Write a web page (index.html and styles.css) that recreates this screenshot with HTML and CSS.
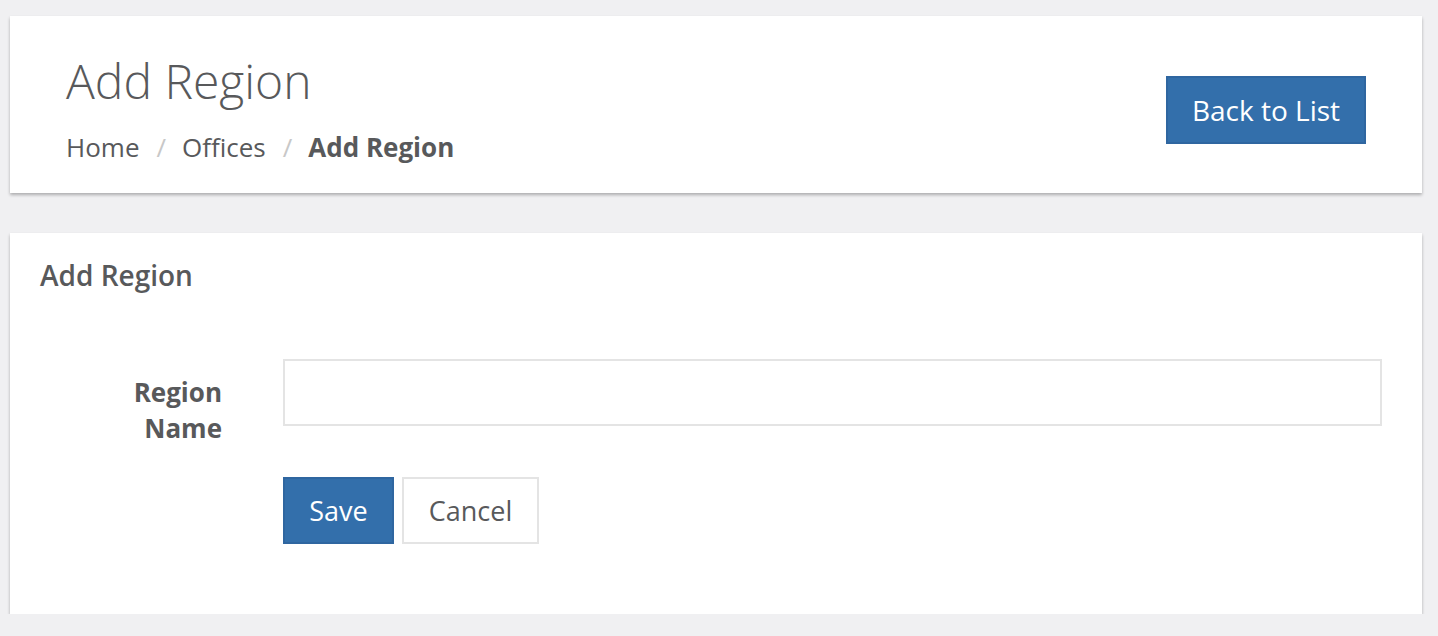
FILE: index.html
```html
<!DOCTYPE html>
<html>
<head>
<meta charset="utf-8">
<link rel="stylesheet" href="styles.css">
</head>
<body>
<div class="page">
  <header class="card head-card">
    <div class="head-text">
      <h1 class="title">Add Region</h1>
      <nav class="crumbs">
        <span class="crumb">Home</span><span class="sep">/</span><span class="crumb">Offices</span><span class="sep">/</span><span class="crumb current">Add Region</span>
      </nav>
    </div>
    <button class="btn btn-primary back-btn">Back to List</button>
  </header>

  <section class="card form-card">
    <h2 class="form-title">Add Region</h2>
    <div class="form-row">
      <label class="field-label">Region<br>Name</label>
      <div class="field">
        <input class="text-input" type="text">
      </div>
    </div>
    <div class="actions">
      <button class="btn btn-primary">Save</button>
      <button class="btn btn-default">Cancel</button>
    </div>
  </section>
</div>
</body>
</html>
```

FILE: styles.css
```css
html, body {
  margin: 0;
  padding: 0;
  background: #f0f0f2;
}
body {
  font-family: "Open Sans", "Liberation Sans", sans-serif;
  color: #58595b;
}
.page {
  padding: 16px 16px 0 10px;
  display: flex;
  flex-direction: column;
  gap: 40px;
}
.card {
  background: #fff;
  box-shadow: 0 2px 3px rgba(0, 0, 0, 0.28);
}
.head-card {
  display: flex;
  justify-content: space-between;
  align-items: flex-start;
  padding: 37px 56px 28px 56px;
}
.title {
  margin: 0;
  font-size: 48px;
  font-weight: 300;
  line-height: 56px;
  color: #58595b;
}
.crumbs {
  margin-top: 20px;
  font-size: 26px;
  line-height: 36px;
  color: #58595b;
}
.sep {
  color: #c8c8c8;
  margin: 0 16px 0 17px;
}
.current {
  font-weight: 700;
}
.btn {
  font-family: "Open Sans", "Liberation Sans", sans-serif;
  font-size: 27px;
  height: 67px;
  padding: 0 25px;
  border: 2px solid;
  cursor: pointer;
}
.btn-primary {
  background: #336fab;
  border-color: #2f66a0;
  color: #fff;
}
.btn-default {
  background: #fff;
  border-color: #e4e4e4;
  color: #58595b;
}
.back-btn {
  margin-top: 23px;
  width: 200px;
  height: 68px;
  font-size: 28px;
  padding: 0;
}
.form-card {
  padding: 22px 40px 70px 30px;
}
.form-title {
  margin: 0;
  font-size: 28px;
  font-weight: 600;
  line-height: 40px;
  color: #58595b;
}
.form-row {
  margin-top: 64px;
  display: flex;
  align-items: flex-start;
}
.field-label {
  width: 182px;
  flex: none;
  text-align: right;
  font-size: 26px;
  font-weight: 700;
  line-height: 36px;
  padding-top: 15px;
  margin-right: 61px;
}
.field {
  flex: 1;
}
.text-input {
  display: block;
  box-sizing: border-box;
  width: 100%;
  height: 67px;
  border: 2px solid #e4e4e4;
  outline: none;
  font-size: 26px;
  padding: 0 16px;
}
.actions {
  margin-top: 31px;
  margin-left: 243px;
  display: flex;
  gap: 8px;
}
.actions .btn-primary {
  width: 111px;
  padding: 0;
}
.actions .btn-default {
  width: 137px;
  padding: 0;
}
```
